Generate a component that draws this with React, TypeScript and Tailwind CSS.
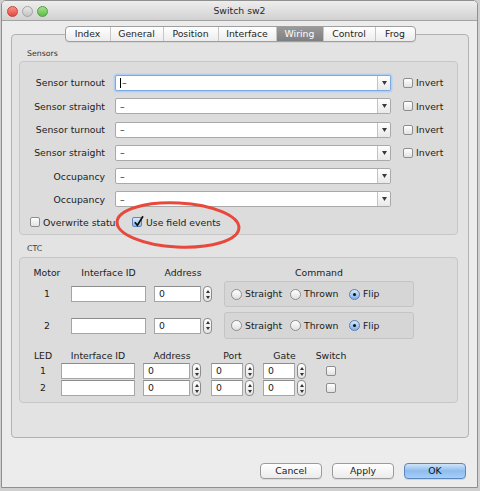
import React from "react";

const tabs: [string, string][] = [
  ["Index", "w-[44px]"],
  ["General", "w-[53px]"],
  ["Position", "w-[55px]"],
  ["Interface", "w-[58px]"],
  ["Wiring", "w-[47px]"],
  ["Control", "w-[52px]"],
  ["Frog", "w-[40px]"],
];

const sensorRows: [string, boolean][] = [
  ["Sensor turnout", true],
  ["Sensor straight", true],
  ["Sensor turnout", true],
  ["Sensor straight", true],
  ["Occupancy", false],
  ["Occupancy", false],
];

function Check({ on }: { on?: boolean }) {
  return (
    <span
      className={`relative inline-flex w-[10px] h-[10px] shrink-0 rounded-[2px] border ${
        on
          ? "border-[#5d83b8] bg-gradient-to-b from-[#dbeafc] to-[#8fbcee]"
          : "border-[#8e8e8e] bg-gradient-to-b from-white to-[#e2e2e2]"
      }`}
    >
      {on && (
        <svg className="absolute left-[0px] top-[-3px]" width="11" height="12" viewBox="0 0 11 12">
          <path d="M1.8 7.2l2.6 3L10 1.2" fill="none" stroke="#111" strokeWidth="1.7" />
        </svg>
      )}
    </span>
  );
}

function Combo({ focus }: { focus?: boolean }) {
  return (
    <div
      className={`flex h-[16px] w-[276px] bg-white rounded-[2px] border ${
        focus ? "border-[#7da8de] shadow-[0_0_0_1.5px_#b3cff1]" : "border-[#a9a9a9]"
      }`}
    >
      <div className="flex-1 flex items-center pl-[4px]">
        {focus && <span className="w-[1px] h-[10px] bg-black mr-[1px]" />}
        <span className="text-[#222]">–</span>
      </div>
      <div className="w-[13px] flex items-center justify-center border-l border-[#c3c3c3] bg-gradient-to-b from-white to-[#e9e9e9] rounded-r-[2px]">
        <svg width="5" height="4" viewBox="0 0 5 4">
          <path d="M0 0h5L2.5 4z" fill="#3a3a3a" />
        </svg>
      </div>
    </div>
  );
}

function Spin() {
  return (
    <span className="flex flex-col items-center justify-center gap-[3px] w-[9px] h-[16px] shrink-0 rounded-[4px] border border-[#8c8c8c] bg-gradient-to-b from-white to-[#e4e4e4]">
      <svg width="4" height="3" viewBox="0 0 4 3">
        <path d="M2 0L4 3H0z" fill="#333" />
      </svg>
      <svg width="4" height="3" viewBox="0 0 4 3">
        <path d="M0 0h4L2 3z" fill="#333" />
      </svg>
    </span>
  );
}

function Field({ w, value }: { w: string; value?: string }) {
  return (
    <span
      className={`flex items-center h-[16px] ${w} shrink-0 bg-white border border-[#a6a6a6] border-t-[#8c8c8c] pl-[4px]`}
    >
      {value}
    </span>
  );
}

function Radio({ on, label }: { on?: boolean; label: string }) {
  return (
    <div className="flex items-center gap-[3px] w-[59px] shrink-0">
      <span
        className={`flex items-center justify-center w-[11px] h-[11px] shrink-0 rounded-full border ${
          on
            ? "border-[#5a7fb5] bg-gradient-to-b from-[#d6e8fb] to-[#7fb0ea]"
            : "border-[#8f8f8f] bg-gradient-to-b from-white to-[#e0e0e0]"
        }`}
      >
        {on && <span className="w-[3px] h-[3px] rounded-full bg-[#111]" />}
      </span>
      <span>{label}</span>
    </div>
  );
}

function Command({ h }: { h: string }) {
  return (
    <div
      className={`flex items-center ${h} w-[190px] ml-[12px] pl-[6px] rounded-[3px] border border-[#c4c4c4] bg-[#d6d6d6]`}
    >
      <Radio label="Straight" />
      <Radio label="Thrown" />
      <Radio on label="Flip" />
    </div>
  );
}

function MotorRow({ n, h }: { n: string; h: string }) {
  return (
    <div className={`flex items-center ${h}`}>
      <span className="w-[38px] text-center">{n}</span>
      <span className="ml-[5px]">
        <Field w="w-[75px]" />
      </span>
      <span className="ml-[8px] flex items-center gap-[2px]">
        <Field w="w-[47px]" value="0" />
        <Spin />
      </span>
      <Command h={h} />
    </div>
  );
}

function LedRow({ n }: { n: string }) {
  return (
    <div className="flex items-center h-[16px]">
      <span className="w-[26px] text-center">{n}</span>
      <span className="ml-[5px]">
        <Field w="w-[74px]" />
      </span>
      <span className="ml-[8px] flex items-center gap-[2px]">
        <Field w="w-[47px]" value="0" />
        <Spin />
      </span>
      <span className="ml-[10px] flex items-center gap-[2px]">
        <Field w="w-[32px]" value="0" />
        <Spin />
      </span>
      <span className="ml-[9px] flex items-center gap-[2px]">
        <Field w="w-[32px]" value="0" />
        <Spin />
      </span>
      <span className="ml-[8px] w-[34px] flex justify-center">
        <Check />
      </span>
    </div>
  );
}

export default function App() {
  return (
    <div className="relative w-[480px] h-[491px] overflow-hidden bg-[#cfcfcf] text-[9.3px] leading-none text-[#1b1b1b] font-['DejaVu_Sans',sans-serif]">
      <div className="ml-[1px] w-[477px] h-[488px] flex flex-col bg-[#ececec] border border-[#8f8f8f] rounded-t-[5px] overflow-hidden">
        {/* title bar */}
        <div className="h-[20px] shrink-0 grid grid-cols-[1fr_auto_1fr] items-center border-b border-[#a3a3a3] bg-gradient-to-b from-[#eeeeee] to-[#d1d1d1]">
          <div className="flex items-center gap-[4px] pl-[5px] pt-[1px]">
            <span className="w-[11px] h-[11px] rounded-full border border-[#c2453b] bg-gradient-to-b from-[#f7918a] to-[#e2473d]" />
            <span className="w-[11px] h-[11px] rounded-full border border-[#a4a4a4] bg-gradient-to-b from-[#e8e8e8] to-[#c4c4c4]" />
            <span className="w-[11px] h-[11px] rounded-full border border-[#4f9a43] bg-gradient-to-b from-[#a6e08f] to-[#5bbd48]" />
          </div>
          <div className="text-[#2a2a2a] pt-[1px]">Switch sw2</div>
          <div />
        </div>

        <div className="flex flex-col pt-[5px] pl-[9px] pr-[8px]">
          {/* tabs */}
          <div className="relative z-10 flex justify-center h-[16px]">
            <div className="flex rounded-[4px] border border-[#9e9e9e] bg-gradient-to-b from-white to-[#ececec] overflow-hidden shadow-[0_1px_0_rgba(0,0,0,0.06)]">
              {tabs.map(([t, w], i) => (
                <div
                  key={t}
                  className={`${w} flex items-center justify-center ${i > 0 ? "border-l border-[#c6c6c6]" : ""} ${
                    t === "Wiring"
                      ? "bg-gradient-to-b from-[#9a9a9a] to-[#7f7f7f] text-white"
                      : "text-[#1f1f1f]"
                  }`}
                >
                  {t}
                </div>
              ))}
            </div>
          </div>

          {/* tab pane */}
          <div className="-mt-[8px] h-[404px] rounded-[4px] border border-[#b3b3b3] bg-[#e3e3e3] pt-[13px] pl-[7px]">
            <div className="h-[12px] flex items-center pl-[8px] text-[7.8px] text-[#333]">Sensors</div>
            <div className="mt-[1px] w-[439px] h-[174px] rounded-[4px] border border-[#c7c7c7] bg-[#dcdcdc] pt-[13px]">
              <div className="flex flex-col gap-[7.3px]">
                {sensorRows.map(([label, inv], i) => (
                  <div key={i} className="flex items-center h-[16px]">
                    <span className="w-[85px] text-right">{label}</span>
                    <span className="ml-[10px]">
                      <Combo focus={i === 0} />
                    </span>
                    {inv && (
                      <span className="ml-[12px] flex items-center gap-[3px]">
                        <Check />
                        <span>Invert</span>
                      </span>
                    )}
                  </div>
                ))}
              </div>
              <div className="mt-[9px] h-[12px] flex items-center pl-[10px]">
                <Check />
                <span className="ml-[3px] w-[75px] overflow-hidden whitespace-nowrap">Overwrite status</span>
                <span className="ml-[14px]">
                  <Check on />
                </span>
                <span className="ml-[4px]">Use field events</span>
              </div>
            </div>

            <div className="mt-[8px] h-[12px] flex items-center pl-[8px] text-[7.8px] text-[#333]">CTC</div>
            <div className="mt-[2px] w-[439px] h-[146px] rounded-[4px] border border-[#c7c7c7] bg-[#dcdcdc] pt-[9px] pl-[8px]">
              <div className="flex items-center h-[12px]">
                <span className="w-[38px] text-center">Motor</span>
                <span className="ml-[5px] w-[75px] text-center">Interface ID</span>
                <span className="ml-[8px] w-[58px] text-center">Address</span>
                <span className="ml-[12px] w-[190px] text-center">Command</span>
              </div>
              <div className="mt-[2px]">
                <MotorRow n="1" h="h-[26px]" />
              </div>
              <div className="mt-[5px]">
                <MotorRow n="2" h="h-[27px]" />
              </div>

              <div className="pl-[2px] mt-[11px]">
                <div className="flex items-center h-[12px]">
                  <span className="w-[26px] text-center">LED</span>
                  <span className="ml-[5px] w-[74px] text-center">Interface ID</span>
                  <span className="ml-[8px] w-[58px] text-center">Address</span>
                  <span className="ml-[10px] w-[43px] text-center">Port</span>
                  <span className="ml-[9px] w-[43px] text-center">Gate</span>
                  <span className="ml-[8px] w-[34px] text-center">Switch</span>
                </div>
                <div className="mt-[1px] flex flex-col gap-[1px]">
                  <LedRow n="1" />
                  <LedRow n="2" />
                </div>
              </div>
            </div>
          </div>

          {/* buttons */}
          <div className="mt-[25px] flex justify-end gap-[10px] pr-[3px]">
            <button className="w-[62px] h-[16px] rounded-[4px] border border-[#9b9b9b] bg-gradient-to-b from-white to-[#ebebeb] text-[#1b1b1b] shadow-[0_1px_0_rgba(0,0,0,0.08)]">
              Cancel
            </button>
            <button className="w-[62px] h-[16px] rounded-[4px] border border-[#9b9b9b] bg-gradient-to-b from-white to-[#ebebeb] text-[#1b1b1b] shadow-[0_1px_0_rgba(0,0,0,0.08)]">
              Apply
            </button>
            <button className="w-[62px] h-[16px] rounded-[4px] border border-[#5a86bf] bg-gradient-to-b from-[#cfe4f9] via-[#8ebcee] to-[#a7cff6] text-[#111] shadow-[0_1px_0_rgba(0,0,0,0.1)]">
              OK
            </button>
          </div>
        </div>
      </div>

      {/* red annotation ring */}
      <svg className="absolute left-[113px] top-[199px]" width="130" height="52" viewBox="0 0 130 52">
        <ellipse
          cx="65"
          cy="26"
          rx="61"
          ry="22"
          transform="rotate(3 65 26)"
          fill="none"
          stroke="#e9493c"
          strokeWidth="3"
        />
      </svg>
    </div>
  );
}
